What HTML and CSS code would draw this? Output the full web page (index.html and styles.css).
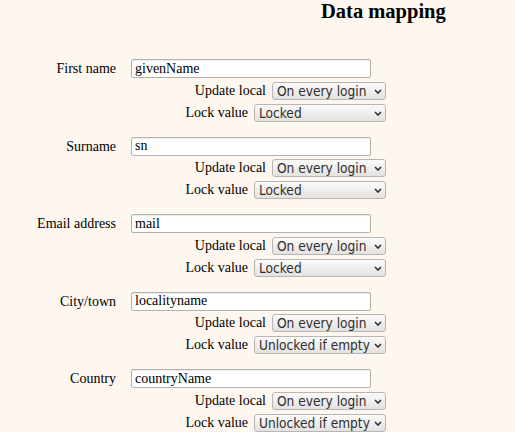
FILE: index.html
```html
<!DOCTYPE html>
<html lang="en">
<head>
    <meta charset="UTF-8">
    <title>Data mapping</title>
    <link rel="stylesheet" href="styles.css">
</head>
<body>
    <h2 class="title">Data mapping</h2>

    <div class="mapping">
        <div class="group">
            <label class="field-label">First name</label>
            <div class="field">
                <input type="text" value="givenName">
                <div class="opt"><span>Update local</span><span class="sel upd"><select><option>On every login</option></select><svg viewBox="0 0 8 5"><path d="M1 1 L4 4 L7 1"/></svg></span></div>
                <div class="opt"><span>Lock value</span><span class="sel lock"><select><option>Locked</option></select><svg viewBox="0 0 8 5"><path d="M1 1 L4 4 L7 1"/></svg></span></div>
            </div>
        </div>

        <div class="group">
            <label class="field-label">Surname</label>
            <div class="field">
                <input type="text" value="sn">
                <div class="opt"><span>Update local</span><span class="sel upd"><select><option>On every login</option></select><svg viewBox="0 0 8 5"><path d="M1 1 L4 4 L7 1"/></svg></span></div>
                <div class="opt"><span>Lock value</span><span class="sel lock"><select><option>Locked</option></select><svg viewBox="0 0 8 5"><path d="M1 1 L4 4 L7 1"/></svg></span></div>
            </div>
        </div>

        <div class="group">
            <label class="field-label">Email address</label>
            <div class="field">
                <input type="text" value="mail">
                <div class="opt"><span>Update local</span><span class="sel upd"><select><option>On every login</option></select><svg viewBox="0 0 8 5"><path d="M1 1 L4 4 L7 1"/></svg></span></div>
                <div class="opt"><span>Lock value</span><span class="sel lock"><select><option>Locked</option></select><svg viewBox="0 0 8 5"><path d="M1 1 L4 4 L7 1"/></svg></span></div>
            </div>
        </div>

        <div class="group">
            <label class="field-label">City/town</label>
            <div class="field">
                <input type="text" value="localityname">
                <div class="opt"><span>Update local</span><span class="sel upd"><select><option>On every login</option></select><svg viewBox="0 0 8 5"><path d="M1 1 L4 4 L7 1"/></svg></span></div>
                <div class="opt"><span>Lock value</span><span class="sel lock"><select><option>Unlocked if empty</option></select><svg viewBox="0 0 8 5"><path d="M1 1 L4 4 L7 1"/></svg></span></div>
            </div>
        </div>

        <div class="group">
            <label class="field-label">Country</label>
            <div class="field">
                <input type="text" value="countryName">
                <div class="opt"><span>Update local</span><span class="sel upd"><select><option>On every login</option></select><svg viewBox="0 0 8 5"><path d="M1 1 L4 4 L7 1"/></svg></span></div>
                <div class="opt"><span>Lock value</span><span class="sel lock"><select><option>Unlocked if empty</option></select><svg viewBox="0 0 8 5"><path d="M1 1 L4 4 L7 1"/></svg></span></div>
            </div>
        </div>
    </div>
</body>
</html>
```

FILE: styles.css
```css
body {
    margin: 0;
    background: #fdf7f0;
    font-family: "Liberation Serif", "Times New Roman", serif;
    font-size: 14px;
    color: #000;
    overflow: hidden;
}
.title {
    margin: 0 0 0 321px;
    padding-top: 0;
    font-size: 20.5px;
    font-weight: bold;
    line-height: 22px;
}
.mapping {
    margin-top: 37px;
}
.group {
    display: grid;
    grid-template-columns: 116px 255px;
    column-gap: 15px;
    align-items: start;
    margin-bottom: 14.5px;
}
.field-label {
    text-align: right;
    line-height: 19px;
}
.field {
    display: flex;
    flex-direction: column;
    gap: 3px;
}
input {
    box-sizing: border-box;
    width: 240px;
    height: 19px;
    margin: 0;
    padding: 0 3px;
    border: 1px solid #b4b0ab;
    border-radius: 2px;
    box-shadow: inset 0 1px 1px rgba(0,0,0,0.08);
    background: #fff;
    font-family: "Liberation Serif", "Times New Roman", serif;
    font-size: 14px;
    color: #000;
}
.opt {
    display: flex;
    justify-content: flex-end;
    align-items: center;
    gap: 6px;
    height: 19px;
}
.sel {
    position: relative;
    display: block;
}
select {
    appearance: none;
    -webkit-appearance: none;
    box-sizing: border-box;
    height: 18px;
    margin: 0;
    padding: 0 6px 0 4px;
    border: 1px solid #b8b5b2;
    border-radius: 3px;
    background: linear-gradient(#fbfbfa, #e4e2e0);
    font-family: "DejaVu Sans Condensed", "DejaVu Sans", sans-serif;
    font-stretch: condensed;
    font-size: 13.6px;
    line-height: 16px;
    color: #2e2e2e;
}
.upd select {
    width: 114px;
}
.lock select {
    width: 132px;
}
.sel svg {
    position: absolute;
    right: 4px;
    top: 7px;
    width: 8px;
    height: 5px;
    pointer-events: none;
}
.sel path {
    fill: none;
    stroke: #2e2e2e;
    stroke-width: 1.6;
}
```
